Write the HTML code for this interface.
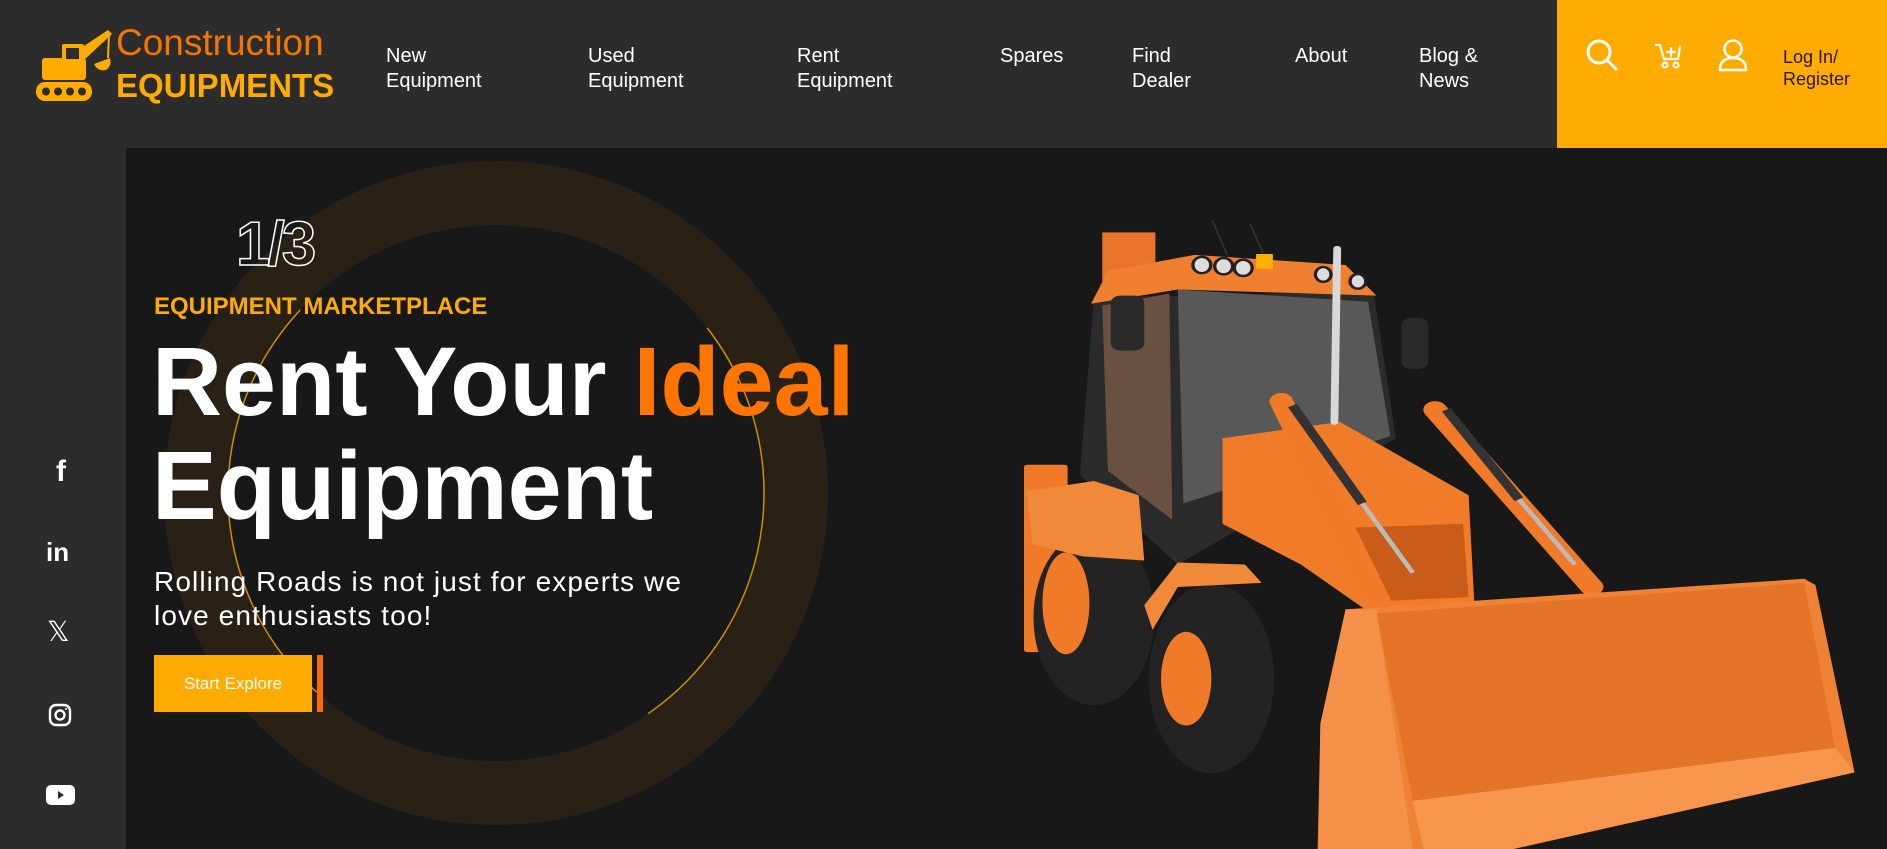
<!DOCTYPE html>
<html><head><meta charset="utf-8">
<style>
*{margin:0;padding:0;box-sizing:border-box}
html,body{width:1887px;height:849px;overflow:hidden}
body{background:#181818;font-family:"Liberation Sans",sans-serif;position:relative}
#wrap{position:absolute;left:0;top:0;width:1887px;height:849px;overflow:hidden}
.hdr{position:absolute;left:0;top:0;width:1887px;height:148px;background:#2c2c2c}
.side{position:absolute;left:0;top:148px;width:126px;height:701px;background:#2c2c2c}
.nav{position:absolute;top:44px;color:#fff;font-size:20px;line-height:25px}
.yb{position:absolute;left:1557px;top:0;width:330px;height:148px;background:#ffab00}
.abs{position:absolute}
</style></head><body><div id="wrap">
<div class="hdr"></div>
<div class="side"></div>

<svg class="abs" style="left:34px;top:28px" width="80" height="75" viewBox="0 0 80 75">
 <g fill="#ffab00">
  <rect x="2" y="54" width="56" height="19" rx="9"/>
  <rect x="8" y="30" width="44" height="22" rx="3"/>
  <rect x="28" y="16" width="22" height="22" rx="2"/>
  <polygon points="44,22 74,2 78,6 50,32"/>
 </g>
 <rect x="32" y="20" width="13" height="11" fill="#2c2c2c"/>
 <line x1="75" y1="6" x2="74" y2="30" stroke="#ffab00" stroke-width="2"/>
 <path d="M60 36 Q64 44 72 42 Q78 38 76 30 Z" fill="#ffab00"/>
 <g fill="#2c2c2c"><circle cx="12" cy="63.5" r="4"/><circle cx="24" cy="63.5" r="4"/><circle cx="36" cy="63.5" r="4"/><circle cx="48" cy="63.5" r="4"/></g>
</svg>
<div class="abs" style="left:116px;top:22px;color:#f47600;font-size:37px;line-height:42px">Construction</div>
<div class="abs" style="left:116px;top:66px;color:#ffab00;font-size:33px;font-weight:bold;line-height:40px">EQUIPMENTS</div>

<div class="nav" style="left:386px">New<br>Equipment</div>
<div class="nav" style="left:588px">Used<br>Equipment</div>
<div class="nav" style="left:797px">Rent<br>Equipment</div>
<div class="nav" style="left:1000px">Spares</div>
<div class="nav" style="left:1132px">Find<br>Dealer</div>
<div class="nav" style="left:1295px">About</div>
<div class="nav" style="left:1419px">Blog &amp;<br>News</div>

<div class="yb"></div>
<svg class="abs" style="left:1585px;top:38px" width="36" height="36" viewBox="0 0 36 36" fill="none" stroke="#fff" stroke-width="3" stroke-linecap="round"><circle cx="14" cy="14" r="11"/><line x1="22" y1="22" x2="31" y2="31"/></svg>
<svg class="abs" style="left:1655px;top:42px" width="28" height="28" viewBox="0 0 28 28" fill="none" stroke="#fff" stroke-width="2.2" stroke-linecap="round"><path d="M1 3h4l4 14h14l2-12"/><path d="M16 6v8M12 10h8"/><circle cx="10" cy="23" r="2.5"/><circle cx="21" cy="23" r="2.5"/></svg>
<svg class="abs" style="left:1717px;top:38px" width="32" height="36" viewBox="0 0 32 36" fill="none" stroke="#fff" stroke-width="2.6"><circle cx="16" cy="11" r="8.5"/><path d="M3 32 Q3 20 16 20 Q29 20 29 32 Z" stroke-linejoin="round"/></svg>
<div class="abs" style="left:1783px;top:46px;color:#2a1500;font-size:18px;line-height:22px">Log In/<br>Register</div>

<div class="abs" style="left:50px;top:457px;color:#fff;font-size:30px;font-weight:bold;line-height:30px;width:22px;text-align:center">f</div>
<div class="abs" style="left:46px;top:538px;color:#fff;font-size:26px;font-weight:bold;line-height:28px">in</div>
<div class="abs" style="left:47px;top:617px;color:#fff;font-size:28px;line-height:30px">𝕏</div>
<svg class="abs" style="left:48px;top:703px" width="24" height="24" viewBox="0 0 24 24" fill="none" stroke="#fff" stroke-width="2.4"><rect x="2" y="2" width="20" height="20" rx="6"/><circle cx="12" cy="12" r="4.5"/><circle cx="18" cy="6" r="1" fill="#fff" stroke="none"/></svg>
<svg class="abs" style="left:46px;top:785px" width="29" height="20" viewBox="0 0 29 20"><rect width="29" height="20" rx="5" fill="#fff"/><polygon points="12,6 18,10 12,14" fill="#2c2c2c"/></svg>

<svg class="abs" style="left:126px;top:148px" width="900" height="701" viewBox="126 148 900 701">
 <circle cx="496" cy="493" r="300" fill="none" stroke="#292116" stroke-width="64"/>
 <circle cx="496" cy="493" r="268" fill="none" stroke="#d08f00" stroke-width="1.5" stroke-dasharray="437 358 426 463" transform="rotate(322 496 493)"/>
</svg>

<div class="abs" style="left:236px;top:210px;font-size:62px;font-weight:bold;color:transparent;-webkit-text-stroke:1.5px #fff;line-height:70px;letter-spacing:-3px">1/3</div>
<div class="abs" style="left:154px;top:293px;color:#ffab00;font-size:24px;font-weight:bold;line-height:28px">EQUIPMENT MARKETPLACE</div>
<div class="abs" style="left:152px;top:330px;color:#fff;font-size:97px;font-weight:bold;line-height:104px">Rent Your <span style="color:#ff7500">Ideal</span><br>Equipment</div>
<div class="abs" style="left:154px;top:565px;color:#fff;font-size:28px;line-height:34px;letter-spacing:1.1px">Rolling Roads is not just for experts we<br>love enthusiasts too!</div>
<div class="abs" style="left:154px;top:655px;width:158px;height:57px;background:#ffab00;color:#fff;font-size:17px;line-height:57px;text-align:center">Start Explore</div>
<div class="abs" style="left:317px;top:655px;width:6px;height:57px;background:#ff6a00"></div>

<svg class="abs" style="left:1010px;top:210px" width="877" height="639" viewBox="0 0 1568 1568" preserveAspectRatio="none">
 <g stroke="#333" stroke-width="3"><line x1="362" y1="25" x2="388" y2="110"/><line x1="430" y1="35" x2="452" y2="105"/></g>
 <rect x="25" y="625" width="78" height="460" rx="6" fill="#f07a28"/>
 <rect x="165" y="55" width="95" height="120" fill="#e8732a"/>
 <polygon points="150,215 650,200 690,560 300,870 125,650" fill="#2b2b2b"/>
 <polygon points="300,195 640,225 680,555 310,720" fill="#585858"/>
 <polygon points="165,235 285,205 290,760 175,640" fill="#6a5040"/>
 <polygon points="145,230 175,150 330,110 600,135 655,210 300,195" fill="#f08030"/>
 <g fill="#ddd" stroke="#222" stroke-width="6"><ellipse cx="343" cy="135" rx="16" ry="20"/><ellipse cx="382" cy="138" rx="16" ry="20"/><ellipse cx="417" cy="142" rx="16" ry="20"/><ellipse cx="560" cy="158" rx="14" ry="18"/><ellipse cx="622" cy="175" rx="14" ry="18"/></g>
 <rect x="440" y="108" width="30" height="36" fill="#ffb000"/>
 <rect x="180" y="210" width="60" height="135" rx="18" fill="#2a2a2a"/>
 <rect x="700" y="265" width="48" height="125" rx="18" fill="#2a2a2a"/>
 <ellipse cx="150" cy="1000" rx="108" ry="215" fill="#232323"/>
 <ellipse cx="100" cy="965" rx="42" ry="125" fill="#f07a28"/>
 <polygon points="30,690 150,665 230,700 240,860 130,850 40,820" fill="#f08a3a"/>
 <polygon points="380,560 590,520 820,700 830,960 640,985 520,870 380,770" fill="#f07c2a"/>
 <polygon points="600,780 810,770 820,950 660,960" fill="#c85c18"/>
 <ellipse cx="360" cy="1150" rx="112" ry="232" fill="#232323"/>
 <ellipse cx="315" cy="1150" rx="45" ry="115" fill="#f07a28"/>
 <polygon points="240,970 300,865 420,870 450,915 300,925 255,1030" fill="#f08a3a"/>
 <g stroke="#f07a28" stroke-width="42" stroke-linecap="round"><line x1="485" y1="470" x2="660" y2="960"/><line x1="760" y1="490" x2="1040" y2="925"/></g>
 <g stroke="#333" stroke-width="18"><line x1="505" y1="480" x2="630" y2="720"/><line x1="780" y1="490" x2="910" y2="710"/></g>
 <g stroke="#bbb" stroke-width="9"><line x1="630" y1="720" x2="720" y2="890"/><line x1="910" y1="710" x2="1010" y2="870"/></g>
 <line x1="585" y1="95" x2="580" y2="520" stroke="#d8d8d8" stroke-width="14" stroke-linecap="round"/>
 <polygon points="600,980 1420,905 1440,920 1510,1380 900,1568 550,1568 555,1260" fill="#f08236"/>
 <polygon points="655,990 1420,915 1475,1320 720,1450" fill="#e47428"/>
 <polygon points="720,1450 1475,1320 1510,1380 900,1568 740,1568" fill="#f7954c"/>
 <polygon points="600,980 655,980 720,1568 552,1568 555,1260" fill="#f49048"/>
</svg>
</div></body></html>
